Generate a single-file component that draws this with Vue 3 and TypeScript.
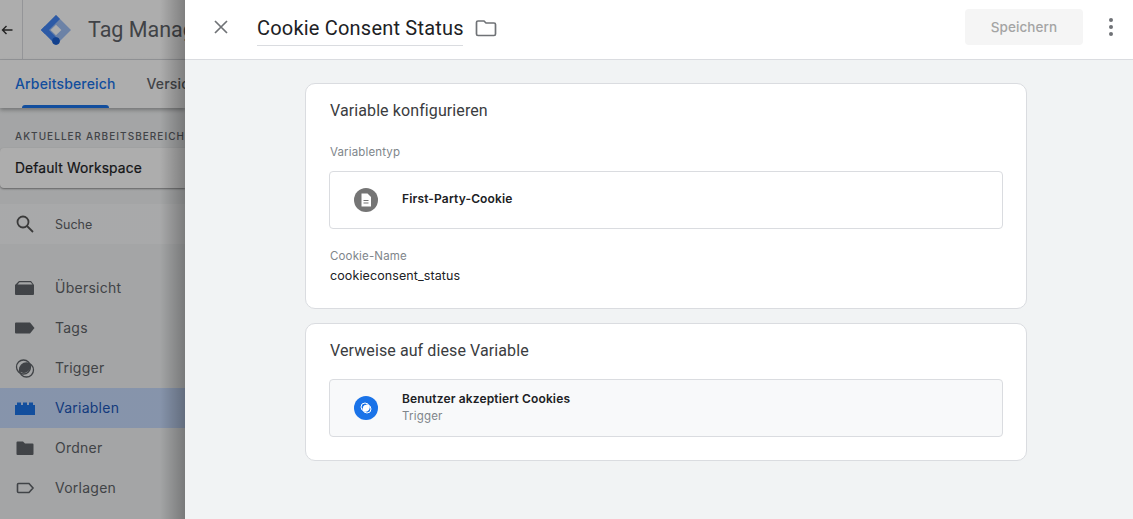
<script setup lang="ts">
interface NavItem { label: string; icon: string; active?: boolean }
const nav: NavItem[] = [
  { label: 'Übersicht', icon: 'overview' },
  { label: 'Tags', icon: 'tag' },
  { label: 'Trigger', icon: 'trigger' },
  { label: 'Variablen', icon: 'brick', active: true },
  { label: 'Ordner', icon: 'folder' },
  { label: 'Vorlagen', icon: 'template' }
]
</script>

<template>
  <div class="page">
    <aside class="side">
      <header class="side-top">
        <div class="back">
          <svg width="12" height="12" viewBox="0 0 12 12"><path d="M11.500 6H1.500M5.500 2 1.500 6l4 4" fill="none" stroke="#333" stroke-width="1.400"/></svg>
        </div>
        <svg class="logo" width="30" height="30" viewBox="0 0 30 30">
          <path d="M15 0 30 15 15 30 0 15Z" fill="#9fbff5" />
          <path d="M15 0 19 4 4 19 0 15Z" fill="#4285f4" />
          <path d="M4 11 19 26 15 30 0 15Z" fill="#4285f4" />
          <rect x="11.200" y="11.200" width="7.600" height="7.600" transform="rotate(45 15 15)" fill="#fff" />
          <circle cx="15" cy="26" r="3.800" fill="#1a5fd0" />
        </svg>
        <span class="product">Tag Manager</span>
      </header>
      <nav class="tabs">
        <span class="tab tab-on">Arbeitsbereich</span>
        <span class="tab">Versionen</span>
      </nav>
      <div class="caption">AKTUELLER ARBEITSBEREICH</div>
      <div class="workspace">Default Workspace</div>
      <div class="search">
        <svg width="20" height="20" viewBox="0 0 20 20"><circle cx="8" cy="8" r="5.500" fill="none" stroke="#555" stroke-width="1.800"/><path d="m12 12 6 6" stroke="#555" stroke-width="1.800"/></svg>
        <span>Suche</span>
      </div>
      <ul class="nav">
        <li v-for="item in nav" :key="item.label" class="nav-row" :class="{ on: item.active }">
          <svg class="nav-ico" width="20" height="20" viewBox="0 0 20 20">
            <path v-if="item.icon === 'overview'" d="M4 3h12l3 4v9a1 1 0 0 1-1 1H1a1 1 0 0 1-1-1V7l1-1 3-3Zm.500 1.200L2.500 6.500h15L15.500 4.200Z" fill="#5f6368" fill-rule="evenodd" />
            <path v-else-if="item.icon === 'tag'" d="M1 4.500h14l4.500 5.500-4.500 5.500H1a1 1 0 0 1-1-1v-9a1 1 0 0 1 1-1Z" fill="#5f6368" />
            <template v-else-if="item.icon === 'trigger'">
              <circle cx="8.500" cy="9" r="7" fill="none" stroke="#5f6368" stroke-width="1.300" />
              <circle cx="11.500" cy="12" r="7" fill="none" stroke="#5f6368" stroke-width="1.300" />
              <path d="M15.500 6.500a7 7 0 0 1-11 7 7 7 0 0 1 11-7Z" fill="#5f6368" />
            </template>
            <path v-else-if="item.icon === 'brick'" d="M0 7h2V4.500h4V7h2V4.500h4V7h2V4.500h4V7h2v10H0Z" fill="#1a73e8" />
            <path v-else-if="item.icon === 'folder'" d="M2.500 3.500H8L10 5.500h7.500a1 1 0 0 1 1 1V16a1 1 0 0 1-1 1h-15a1 1 0 0 1-1-1V4.500a1 1 0 0 1 1-1Z" fill="#5f6368" />
            <path v-else d="M3.500 5.500h10.500l4 4.500-4 4.500H3.500a1 1 0 0 1-1-1v-7a1 1 0 0 1 1-1Z" fill="none" stroke="#5f6368" stroke-width="1.600" />
          </svg>
          <span class="nav-text">{{ item.label }}</span>
        </li>
      </ul>
      <div class="scrim"></div>
    </aside>

    <main class="panel">
      <header class="bar">
        <svg class="close" width="16" height="16" viewBox="0 0 16 16"><path d="m2 2 12 12M14 2 2 14" stroke="#6f7276" stroke-width="1.700" /></svg>
        <h1 class="title">Cookie Consent Status</h1>
        <svg class="folder" width="22" height="18" viewBox="0 0 22 18"><path d="M3 2h6l2 2h8a1.500 1.500 0 0 1 1.500 1.500V15a1.500 1.500 0 0 1-1.500 1.500H3A1.500 1.500 0 0 1 1.500 15V3.500A1.500 1.500 0 0 1 3 2Z" fill="none" stroke="#6f7276" stroke-width="1.700" /></svg>
        <button class="save" type="button" disabled>Speichern</button>
        <div class="kebab"><i></i><i></i><i></i></div>
      </header>
      <div class="content">
        <section class="card first">
          <h2>Variable konfigurieren</h2>
          <div class="label type-label">Variablentyp</div>
          <div class="box">
            <span class="badge grey">
              <svg width="16" height="16" viewBox="0 0 16 16"><path d="M3.500 1.500h6L13 5v9.500H3.500Z" fill="#fff" /><path d="M5.500 8.500h5M5.500 11h5" stroke="#757575" stroke-width="1.200" /></svg>
            </span>
            <strong>First-Party-Cookie</strong>
          </div>
          <div class="label name-label">Cookie-Name</div>
          <div class="value">cookieconsent_status</div>
        </section>
        <section class="card second">
          <h2>Verweise auf diese Variable</h2>
          <div class="box ref">
            <span class="badge blue">
              <svg width="14" height="14" viewBox="0 0 14 14"><circle cx="6" cy="6" r="4" fill="none" stroke="#fff" stroke-width="1" /><circle cx="8" cy="8" r="4" fill="none" stroke="#fff" stroke-width="1" /><path d="M10 4.500a4 4 0 0 1-5.500 5.500A4 4 0 0 1 10 4.500Z" fill="#fff" /></svg>
            </span>
            <div class="ref-text">
              <strong>Benutzer akzeptiert Cookies</strong>
              <small>Trigger</small>
            </div>
          </div>
        </section>
      </div>
    </main>
  </div>
</template>

<style>
html, body { margin: 0; height: 100%; overflow: hidden; background: #f1f3f4; }
</style>

<style scoped>
.page { display: flex; width: 1133px; height: 519px; overflow: hidden; font-family: Inter, "Liberation Sans", sans-serif; }
.side { position: relative; flex: 0 0 185px; width: 185px; height: 519px; overflow: hidden; background: #f1f3f4; color: #3c4043; white-space: nowrap; }
.scrim { position: absolute; inset: 0; background: linear-gradient(90deg, rgba(0,0,0,.32) 0, rgba(0,0,0,.32) 160px, rgba(0,0,0,.5) 185px); pointer-events: none; }
.side-top { display: flex; align-items: center; height: 59px; background: #fff; border-bottom: 1px solid #dadce0; }
.back { display: flex; align-items: center; justify-content: flex-start; flex: 0 0 23px; width: 23px; height: 59px; padding-left: 1px; box-sizing: border-box; border-right: 1px solid #dadce0; margin-right: 18px; }
.logo { flex: none; margin-right: 17px; }
.product { font: 400 21.500px Roboto, sans-serif; color: #5f6368; }
.tabs { display: flex; gap: 31px; height: 48px; padding-left: 15px; background: #fff; box-shadow: 0 2px 4px rgba(0,0,0,.3); position: relative; }
.tab { line-height: 47px; font-size: 14px; font-weight: 500; color: #5f6368; letter-spacing: .15px; position: relative; }
.tab-on { color: #1a73e8; }
.tab-on::after { content: ""; position: absolute; left: 7px; right: 7px; bottom: 0; height: 3px; border-radius: 3px 3px 0 0; background: #1a73e8; }
.caption { margin: 22px 0 0 15px; font-size: 10px; line-height: 12px; font-weight: 500; letter-spacing: 1.050px; color: #5f6368; }
.workspace { margin-top: 6px; height: 40px; line-height: 40px; padding-left: 15px; background: #fff; border-radius: 4px 0 0 4px; box-shadow: 0 1px 2px rgba(0,0,0,.4); font-size: 13.800px; font-weight: 400; letter-spacing: .15px; color: #202124; -webkit-text-stroke: .2px #202124; }
.search { display: flex; align-items: center; gap: 20px; margin-top: 16px; height: 40px; padding-left: 15px; background: #f8f9fa; font-size: 12.500px; color: #5f6368; }
.nav { list-style: none; margin: 24px 0 0; padding: 0; }
.nav-row { display: flex; align-items: center; gap: 20px; height: 40px; padding-left: 15px; font-size: 14px; font-weight: 400; color: #5f6368; letter-spacing: .25px; }
.nav-text { margin-top: -1px; }
.nav-row.on { background: #c6dafc; color: #1a56b8; }
.nav-ico { flex: none; }

.panel { flex: 1; min-width: 0; background: #f1f3f4; }
.bar { display: flex; align-items: center; box-sizing: border-box; height: 60px; background: #fff; border-bottom: 1px solid #dadce0; padding: 0 0 5px 28px; }
.close { flex: none; margin-right: 28px; }
.title { flex: none; margin: 3px 13px 0 0; width: 206px; height: 35px; box-sizing: border-box; border-bottom: 1px solid #dadce0; font: 400 20px/34px Roboto, sans-serif; letter-spacing: .2px; color: #202124; white-space: nowrap; }
.folder { flex: none; margin-top: 1px; margin-left: -1px; }
.save { flex: none; margin-left: 468px; width: 118px; height: 36px; border: 0; border-radius: 4px; background: #f5f5f5; color: #a4a4a4; font: 500 13.500px Inter, sans-serif; letter-spacing: .1px; }
.kebab { display: flex; flex: none; flex-direction: column; align-items: center; gap: 3px; width: 12px; margin-left: 22px; }
.kebab i { width: 4px; height: 4px; border-radius: 50%; background: #6f7276; }

.content { display: flex; flex-direction: column; gap: 14px; width: 722px; margin: 23px 0 0 120px; }
.card { box-sizing: border-box; background: #fff; border: 1px solid #dadce0; border-radius: 10px; padding: 0 23px 0 24px; }
.first { height: 226px; }
.second { height: 138px; }
.card h2 { margin: 17px 0 0; font: 400 16px/20px Roboto, sans-serif; letter-spacing: .1px; color: #3a3c40; }
.label { font-size: 11.500px; line-height: 16px; color: #80868b; letter-spacing: .15px; }
.type-label { margin-top: 23px; }
.box { display: flex; align-items: center; box-sizing: border-box; width: 674px; height: 58px; margin: 11px 0 0 -1px; padding-left: 24px; border: 1px solid #dadce0; border-radius: 4px; }
.second .box { margin-top: 18px; background: #f8f9fa; }
.badge { display: flex; align-items: center; justify-content: center; flex: none; width: 24px; height: 24px; border-radius: 50%; margin-right: 24px; }
.grey { background: #757575; }
.blue { background: #1a73e8; }
.box strong { font-size: 12px; font-weight: 600; color: #202124; letter-spacing: .15px; line-height: 16px; margin-top: -2px; }
.ref-text strong { margin-top: 0; }
.name-label { margin-top: 19px; }
.value { margin-top: 4px; font-size: 12.500px; line-height: 16px; color: #202124; letter-spacing: .1px; }
.ref-text { display: flex; flex-direction: column; }
.ref-text small { font-size: 11.500px; line-height: 18px; color: #80868b; letter-spacing: .2px; }
</style>
